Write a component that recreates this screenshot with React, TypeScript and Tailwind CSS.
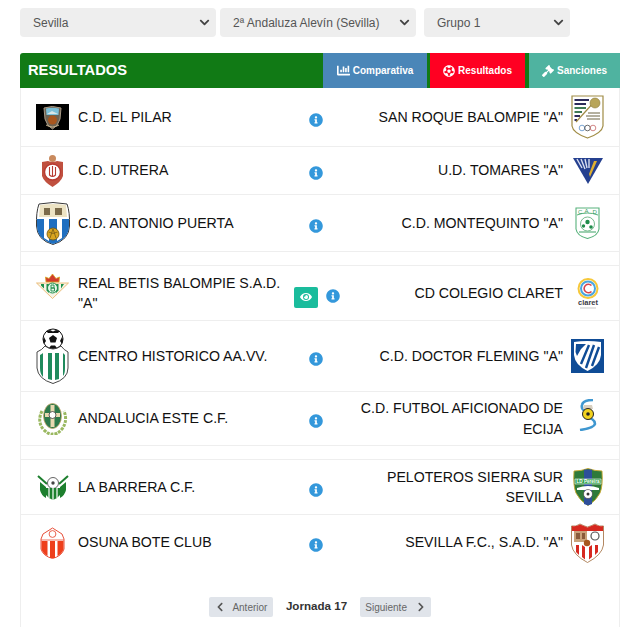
import React from "react";
import { FaChartBar, FaChevronDown, FaChevronLeft, FaChevronRight, FaEye, FaFutbol, FaGavel, FaInfoCircle } from "react-icons/fa";

type Logo = { w: number; h: number; node: React.ReactNode };

const logos: Record<string, Logo> = {
  pilar: {
    w: 33,
    h: 26,
    node: (
      <>
        <rect width="33" height="26" fill="#000" />
        <path d="M8 4 Q16 1 25 4 L24 15 Q22 22 16.5 25 Q11 22 9 15Z" fill="#6d6252" stroke="#a99a86" strokeWidth="1" />
        <path d="M10 4.5 Q16 3 23 4.5 L22.5 11 H10.5Z" fill="#7cc0d8" />
        <path d="M11 10 L16 7 L22 10Z" fill="#d8e6e8" />
        <circle cx="16.5" cy="16" r="4.5" fill="#a8561e" />
        <path d="M10 21 Q16.5 25 23 21" fill="none" stroke="#c8b48e" strokeWidth="1" />
      </>
    ),
  },
  roque: {
    w: 33,
    h: 44,
    node: (
      <>
        <path d="M1 1 H32 V31 Q31 38 16.5 43 Q2 38 1 31Z" fill="#fff" stroke="#a08c45" strokeWidth="1.2" />
        <path d="M3.5 4 H18 V6 H3.5Z M3.5 8 H15 V10 H3.5Z" fill="#2c2a5a" />
        <path d="M3.5 12 H15 V14 H3.5Z M3.5 16 H11 V18 H3.5Z" fill="#3f7a55" />
        <path d="M3.5 20 H9 V22 H3.5Z M3.5 24 H6 V26 H3.5Z" fill="#2c2a5a" />
        <path d="M5 27 L24 6" stroke="#a08c45" strokeWidth="1.2" />
        <circle cx="24" cy="8" r="5" fill="#b8a55a" stroke="#8c7a3a" strokeWidth="0.6" />
        <path d="M17 18 H29 M15 21 H29 M16 24 H29" stroke="#6b6340" strokeWidth="1" />
        <g fill="none" strokeWidth="0.8">
          <circle cx="11" cy="33" r="2.8" stroke="#5a8fc8" />
          <circle cx="16.5" cy="33" r="2.8" stroke="#444" />
          <circle cx="22" cy="33" r="2.8" stroke="#c86a6a" />
        </g>
      </>
    ),
  },
  utrera: {
    w: 23,
    h: 32,
    node: (
      <>
        <circle cx="11.5" cy="3.5" r="3.5" fill="#c98a5e" />
        <path d="M1 7 L7 6 Q11.5 8 16 6 L22 7 V21 Q20 27 11.5 32 Q3 27 1 21Z" fill="#c0503f" />
        <circle cx="11.5" cy="17" r="8" fill="#fff" stroke="#b83a30" strokeWidth="1.4" />
        <path d="M8.5 12 V20 Q11.5 23 14.5 20 V12 M11.5 11 V22" fill="none" stroke="#b83a30" strokeWidth="1.1" />
      </>
    ),
  },
  tomares: {
    w: 30,
    h: 27,
    node: (
      <>
        <path d="M0 1 H30 L15 27Z" fill="#25408f" />
        <path d="M4 2 L9 11 M8 2 L12 12 M12 2 L14 11 M16 2 L16 11" stroke="#d7dcef" strokeWidth="1.4" />
        <path d="M21 4 H24 L17 20 L16 17Z" fill="#e0b030" />
      </>
    ),
  },
  puerta: {
    w: 34,
    h: 43,
    node: (
      <>
        <path d="M3 2 Q17 -1 31 2 Q34 10 33.5 24 Q33 38 17 42.5 Q1 38 0.5 24 Q0 10 3 2Z" fill="#fff" stroke="#3a3a3a" strokeWidth="1" />
        <path d="M4 3 Q17 1 30 3 L31 15 H3Z" fill="#ece3c4" />
        <path d="M8 6 H14 V13 H8Z M19 6 H26 V13 H19Z" fill="#7a6a4a" />
        <path d="M1 17 H33 V24 Q33 37 17 42 Q1 37 1 24Z" fill="#1f6fc0" />
        <path d="M8 17 H13 V39 L8 36Z M21 17 H26 V36 L21 39Z" fill="#fff" />
        <circle cx="17" cy="32" r="6" fill="#d9a520" stroke="#6d5312" strokeWidth="0.8" />
        <path d="M12.5 30 Q17 33 21.5 30 M14 36 L17 27 L20 36" fill="none" stroke="#6d5312" strokeWidth="0.7" />
      </>
    ),
  },
  monte: {
    w: 25,
    h: 32,
    node: (
      <>
        <path d="M1 1 H24 V22 Q23 29 12.5 31.5 Q2 29 1 22Z" fill="#fff" stroke="#58b27c" strokeWidth="1.1" />
        <path d="M2 8 Q12 4 23 8" fill="none" stroke="#58b27c" strokeWidth="1" />
        <text x="3" y="7" fontSize="6" fontFamily="Liberation Sans" fill="#3a9a62">C</text>
        <text x="9.5" y="6" fontSize="6" fontFamily="Liberation Sans" fill="#3a9a62">A</text>
        <text x="17.5" y="7" fontSize="6" fontFamily="Liberation Sans" fill="#3a9a62">D</text>
        <circle cx="12.5" cy="17" r="7" fill="#fff" stroke="#55aa72" strokeWidth="0.8" />
        <circle cx="12.5" cy="15" r="2.2" fill="#1e8c4a" />
        <circle cx="8.5" cy="19" r="1.7" fill="#1e8c4a" />
        <circle cx="16" cy="20" r="1.8" fill="#1e8c4a" />
        <path d="M4 25 H21" stroke="#7cc097" strokeWidth="1.5" />
      </>
    ),
  },
  betis: {
    w: 33,
    h: 26,
    node: (
      <>
        <path d="M10 9 L9.5 4 L13 5.5 L16.5 1 L20 5.5 L23.5 4 L23 9Z" fill="#d03b2e" stroke="#d9a520" strokeWidth="0.8" />
        <path d="M0.5 10 H32.5 L16.5 25.5Z" fill="#f6f3e6" stroke="#e8b060" strokeWidth="0.8" />
        <path d="M5 11 H8 V15.5 L5 12.5Z M10.5 11 H13 V20 L10.5 17.5Z M20 11 H22.5 V17.5 L20 20Z M25 11 H28 L25 15.5Z" fill="#1c8f4a" />
        <circle cx="16.5" cy="15" r="5" fill="#e9f5ec" stroke="#1c8f4a" strokeWidth="1" />
        <path d="M15 12 V18 M15 12 H18 V15 H15 M15 15 H18.5 V18 H15" fill="none" stroke="#1c8f4a" strokeWidth="0.9" />
      </>
    ),
  },
  claret: {
    w: 22,
    h: 31,
    node: (
      <>
        <circle cx="11" cy="10.5" r="9.5" fill="none" stroke="#f6c83a" strokeWidth="2" />
        <circle cx="11" cy="10.5" r="7" fill="none" stroke="#4aa6e0" strokeWidth="2" />
        <path d="M14.5 7.5 A4.3 4.3 0 1 0 14.5 13.5" fill="none" stroke="#d8444c" strokeWidth="1.6" />
        <text x="11" y="27" textAnchor="middle" fontSize="7.5" fontWeight="700" fontFamily="Liberation Sans" fill="#3a3a44">claret</text>
        <path d="M3 30 H19" stroke="#bbb" strokeWidth="0.8" />
      </>
    ),
  },
  historico: {
    w: 33,
    h: 56,
    node: (
      <>
        <circle cx="17" cy="11" r="10" fill="#fff" stroke="#111" strokeWidth="1" />
        <path d="M17 7 L21 10 L19.5 14.5 H14.5 L13 10Z" fill="#111" />
        <path d="M10 3 L14 2 L17 3.5 L20 2 L24 3 L22 5 H12Z M8 9 L10 13 L8 16 L7 12Z M26 9 L24 13 L26 16 L27 12Z M13 20 L15 17.5 H19 L21 20 L17 21Z" fill="#111" />
        <path d="M1 24 Q6 22 9 18 Q17 24 25 18 Q28 22 32 24 V40 Q32 51 17 55.5 Q2 51 1 40Z" fill="#fff" stroke="#333" strokeWidth="0.9" />
        <path d="M4 27 Q6 26 7 25 V49 Q4 46 4 40Z M12 25 H16 V52 L12 51Z M19 25 H23 V51 L19 52Z M27 25 Q28 26 29 27 V40 Q29 46 27 48Z" fill="#1f8a5c" />
      </>
    ),
  },
  fleming: {
    w: 33,
    h: 34,
    node: (
      <>
        <rect width="33" height="34" fill="#0f4c96" />
        <path d="M3 3 Q16 1 30 3 V16 Q29 26 16.5 32 Q4 26 3 16Z" fill="#fff" />
        <path d="M5 5 H15 L10 10 L6 17 L4.5 13Z" fill="#0f4c96" />
        <path d="M18 6 L10 25 M23 6 L15 29 M28 8 L21 27" stroke="#0f4c96" strokeWidth="2.4" />
      </>
    ),
  },
  andalucia: {
    w: 31,
    h: 32,
    node: (
      <>
        <path d="M5 8 Q0 18 6 26 Q12 32 15.5 31 Q20 32 25 26 Q31 18 27 8" fill="none" stroke="#9ab860" strokeWidth="3" strokeDasharray="3 1" />
        <ellipse cx="15.5" cy="13" rx="9" ry="12.5" fill="#2d7a4b" stroke="#c8a86a" strokeWidth="0.8" />
        <path d="M13.5 2 H17.5 V24 H13.5Z M8 10 H23 V14 H8Z" fill="#e8d8b0" />
        <circle cx="15.5" cy="12" r="3.5" fill="#fff" stroke="#333" strokeWidth="0.8" />
      </>
    ),
  },
  ecija: {
    w: 19,
    h: 32,
    node: (
      <>
        <path d="M15 1 Q5 1 4 6 Q3 10 7 12 M6 18 Q17 19 17 25 Q16 29 2 31" fill="none" stroke="#3f97d0" strokeWidth="2.6" />
        <path d="M6 6 H14 L15 10 H5Z" fill="#d8cfc0" />
        <circle cx="10" cy="15" r="5.5" fill="#f2d21e" stroke="#222" strokeWidth="1" />
        <circle cx="10" cy="15" r="1.8" fill="#222" />
      </>
    ),
  },
  barrera: {
    w: 32,
    h: 25,
    node: (
      <>
        <path d="M1 1 L10 9 M31 1 L22 9" stroke="#1d7f2e" strokeWidth="2" />
        <path d="M3 7 L9 12 V23 Q4 20 3 15Z M29 7 L23 12 V23 Q28 20 29 15Z" fill="#1d7f2e" />
        <circle cx="16" cy="8" r="5.5" fill="#fff" stroke="#555" strokeWidth="0.9" />
        <circle cx="16" cy="8" r="1.7" fill="#444" />
        <path d="M9 13 H23 V20 Q20 24 16 25 Q12 24 9 20Z" fill="#1d7f2e" />
        <path d="M12 13 V23 M16 13 V25 M20 13 V23" stroke="#fff" strokeWidth="1.2" />
      </>
    ),
  },
  peloteros: {
    w: 30,
    h: 38,
    node: (
      <>
        <path d="M1 3 Q8 3 15 0.5 Q22 3 29 3 Q30 18 27 25 Q23 33 15 37.5 Q7 33 3 25 Q0 18 1 3Z" fill="#2e7a3a" stroke="#c7a82e" strokeWidth="0.9" />
        <path d="M11 1.5 H19 V36 L15 37.5 L11 36Z" fill="#2e4f9a" />
        <path d="M2 11 H28 V16 H2Z" fill="#2f9f4c" stroke="#fff" strokeWidth="0.6" />
        <text x="15" y="15.2" textAnchor="middle" fontSize="4.6" fontWeight="700" fontFamily="Liberation Sans" fill="#fff">LD Pereira</text>
        <path d="M4 20 Q15 16 26 20 V22 H4Z" fill="#fff" />
        <circle cx="15" cy="26" r="4.5" fill="#fff" stroke="#333" strokeWidth="0.6" />
        <circle cx="15" cy="26" r="1.5" fill="#333" />
      </>
    ),
  },
  osuna: {
    w: 25,
    h: 32,
    node: (
      <>
        <path d="M3 7 L12.5 1 L22 7 L24 12 V22 Q22 29 12.5 31.5 Q3 29 1 22 V12Z" fill="#fff" stroke="#e8503a" strokeWidth="1" />
        <circle cx="12.5" cy="7" r="3.4" fill="#fff" stroke="#e8503a" strokeWidth="0.9" />
        <path d="M1.5 14 H7.5 V29 Q3 27 1.5 22Z M10 14 H15 V31 H10Z M17.5 14 H23.5 V22 Q22 27 17.5 29Z" fill="#ee3f1c" />
        <path d="M1 13 H24" stroke="#e8503a" strokeWidth="0.8" />
      </>
    ),
  },
  sevilla: {
    w: 33,
    h: 40,
    node: (
      <>
        <path d="M0.5 3 Q5 4 9 1 Q13 3 16.5 4 Q20 3 24 1 Q28 4 32.5 3 V22 Q31 32 16.5 39.5 Q2 32 0.5 22Z" fill="#fff" stroke="#a06a3a" strokeWidth="0.8" />
        <path d="M1 3 Q5 4 9 1.5 Q13 3 16.5 4.5 Q20 3 24 1.5 Q28 4 32 3 V8 H1Z" fill="#d6281f" />
        <path d="M3 8 H16 V19 H3Z" fill="#c9a27a" />
        <path d="M5 10 H9 V16 H5Z M11 10 H14 V16 H11Z" fill="#8a5a3a" />
        <circle cx="24" cy="13" r="4" fill="none" stroke="#555" strokeWidth="1.2" />
        <circle cx="16" cy="20" r="3.2" fill="#a8561e" />
        <path d="M5 22 V29 L8 32 V22Z M11 22 V34 L14 36.5 V24Z M18 24 V36.5 L21 34 V22Z M24 22 V32 L27 29 V22Z" fill="#d6281f" />
      </>
    ),
  },
};

const Crest = ({ id }: { id: string }) => {
  const logo = logos[id];
  return (
    <svg width={logo.w} height={logo.h} viewBox={`0 0 ${logo.w} ${logo.h}`} className="block shrink-0">
      {logo.node}
    </svg>
  );
};

type Match = {
  home: string;
  homeLogo: string;
  away: string;
  awayLogo: string;
  rowH: string;
  watch?: boolean;
  gapAfter?: boolean;
  homeLift?: string;
  awayLift?: string;
};

const matches: Match[] = [
  { home: "C.D. EL PILAR", homeLogo: "pilar", away: 'SAN ROQUE BALOMPIE "A"', awayLogo: "roque", rowH: "h-[59px]" },
  { home: "C.D. UTRERA", homeLogo: "utrera", away: 'U.D. TOMARES "A"', awayLogo: "tomares", rowH: "h-[48px]" },
  { home: "C.D. ANTONIO PUERTA", homeLogo: "puerta", away: 'C.D. MONTEQUINTO "A"', awayLogo: "monte", rowH: "h-[57px]", gapAfter: true },
  { home: 'REAL BETIS BALOMPIE S.A.D. "A"', homeLogo: "betis", homeLift: "-mt-[14px]", away: "CD COLEGIO CLARET", awayLogo: "claret", rowH: "h-[55px]", watch: true },
  { home: "CENTRO HISTORICO AA.VV.", homeLogo: "historico", away: 'C.D. DOCTOR FLEMING "A"', awayLogo: "fleming", rowH: "h-[71px]" },
  { home: "ANDALUCIA ESTE C.F.", homeLogo: "andalucia", away: "C.D. FUTBOL AFICIONADO DE ECIJA", awayLogo: "ecija", awayLift: "-mt-[8px]", rowH: "h-[54px]", gapAfter: true },
  { home: "LA BARRERA C.F.", homeLogo: "barrera", away: "PELOTEROS SIERRA SUR SEVILLA", awayLogo: "peloteros", rowH: "h-[55px]" },
  { home: "OSUNA BOTE CLUB", homeLogo: "osuna", away: 'SEVILLA F.C., S.A.D. "A"', awayLogo: "sevilla", rowH: "h-[55px]" },
];

function Filter({ label, width }: { label: string; width: string }) {
  return (
    <div className={`${width} h-[29px] bg-[#eeeeee] rounded-[4px] pl-[13px] pr-[6px] flex items-center justify-between text-[12px] text-[#555555]`}>
      <span>{label}</span>
      <FaChevronDown className="text-[11px] text-[#444444]" />
    </div>
  );
}

function Row({ m }: { m: Match }) {
  return (
    <>
      <div className={`${m.rowH} grid grid-cols-[254px_1fr_264px] items-center border-b last:border-b-0 border-[#eeeeee] px-[15px] text-[14.15px] leading-[20.5px] text-[#111111]`}>
        <div className="flex items-center">
          <div className={`${m.homeLift ?? ""} w-[33px] mr-[9px] flex justify-center shrink-0`}>
            <Crest id={m.homeLogo} />
          </div>
          <span className="w-[206px]">{m.home}</span>
        </div>
        <div className="flex items-center justify-center gap-[8px] pt-[5px] pl-[1px]">
          {m.watch && (
            <span className="w-[24px] h-[21px] ml-[3px] mt-[3px] rounded-[2px] bg-[#1abc9c] flex items-center justify-center text-white text-[12px]">
              <FaEye />
            </span>
          )}
          <FaInfoCircle className="text-[14px] text-[#3498db] shrink-0" />
        </div>
        <div className="flex items-center justify-end">
          <span className="text-right w-[215px]">{m.away}</span>
          <div className={`${m.awayLift ?? ""} w-[33px] ml-[8px] flex justify-center shrink-0`}>
            <Crest id={m.awayLogo} />
          </div>
        </div>
      </div>
      {m.gapAfter && <div className="h-[14px] border-b border-[#eeeeee]" />}
    </>
  );
}

export default function App() {
  return (
    <div className="w-[636px] h-[627px] overflow-hidden bg-white pl-[20px] pr-[16px] pt-[8px] font-['Liberation_Sans',Arial,sans-serif]">
      <div className="flex gap-[4px]">
        <Filter label="Sevilla" width="w-[196px]" />
        <Filter label="2ª Andaluza Alevín (Sevilla)" width="w-[196px]" />
        <div className="ml-[4px]">
          <Filter label="Grupo 1" width="w-[146px]" />
        </div>
      </div>

      <div className="mt-[16px] h-[35px] bg-[#117a15] rounded-t-[3px] flex items-stretch justify-between">
        <h1 className="pl-[8px] flex items-center text-[14.7px] font-bold text-white">RESULTADOS</h1>
        <div className="flex items-stretch text-[10px] font-bold text-white">
          <div className="w-[104px] bg-[#4a86b8] flex items-center justify-center gap-[3px]">
            <FaChartBar className="text-[13px]" />
            <span>Comparativa</span>
          </div>
          <div className="w-[95px] ml-[3px] bg-[#ff0022] flex items-center justify-center gap-[3px]">
            <FaFutbol className="text-[12px]" />
            <span>Resultados</span>
          </div>
          <div className="w-[91px] ml-[4px] bg-[#4fb3a0] flex items-center justify-center gap-[3px]">
            <FaGavel className="text-[12px]" />
            <span>Sanciones</span>
          </div>
        </div>
      </div>

      <div className="border-x border-[#eeeeee] h-[540px]">
        <div>
          {matches.map((m) => (
            <Row key={m.home} m={m} />
          ))}
        </div>
        <div className="mt-[27px] flex items-start justify-center">
          <button className="w-[64px] h-[20px] pl-[1px] rounded-[2px] bg-[#e0e4ea] flex items-center justify-center gap-[7px] text-[10px] text-[#666666]">
            <FaChevronLeft className="text-[10px] text-[#555555]" />
            <span>Anterior</span>
          </button>
          <span className="mx-[13px] text-[11.6px] font-bold leading-[18px] text-[#333333]">Jornada 17</span>
          <button className="w-[71px] h-[20px] rounded-[2px] bg-[#e0e4ea] flex items-center justify-center gap-[9px] text-[10px] text-[#666666]">
            <span>Siguiente</span>
            <FaChevronRight className="text-[10px] text-[#555555]" />
          </button>
        </div>
      </div>
    </div>
  );
}
